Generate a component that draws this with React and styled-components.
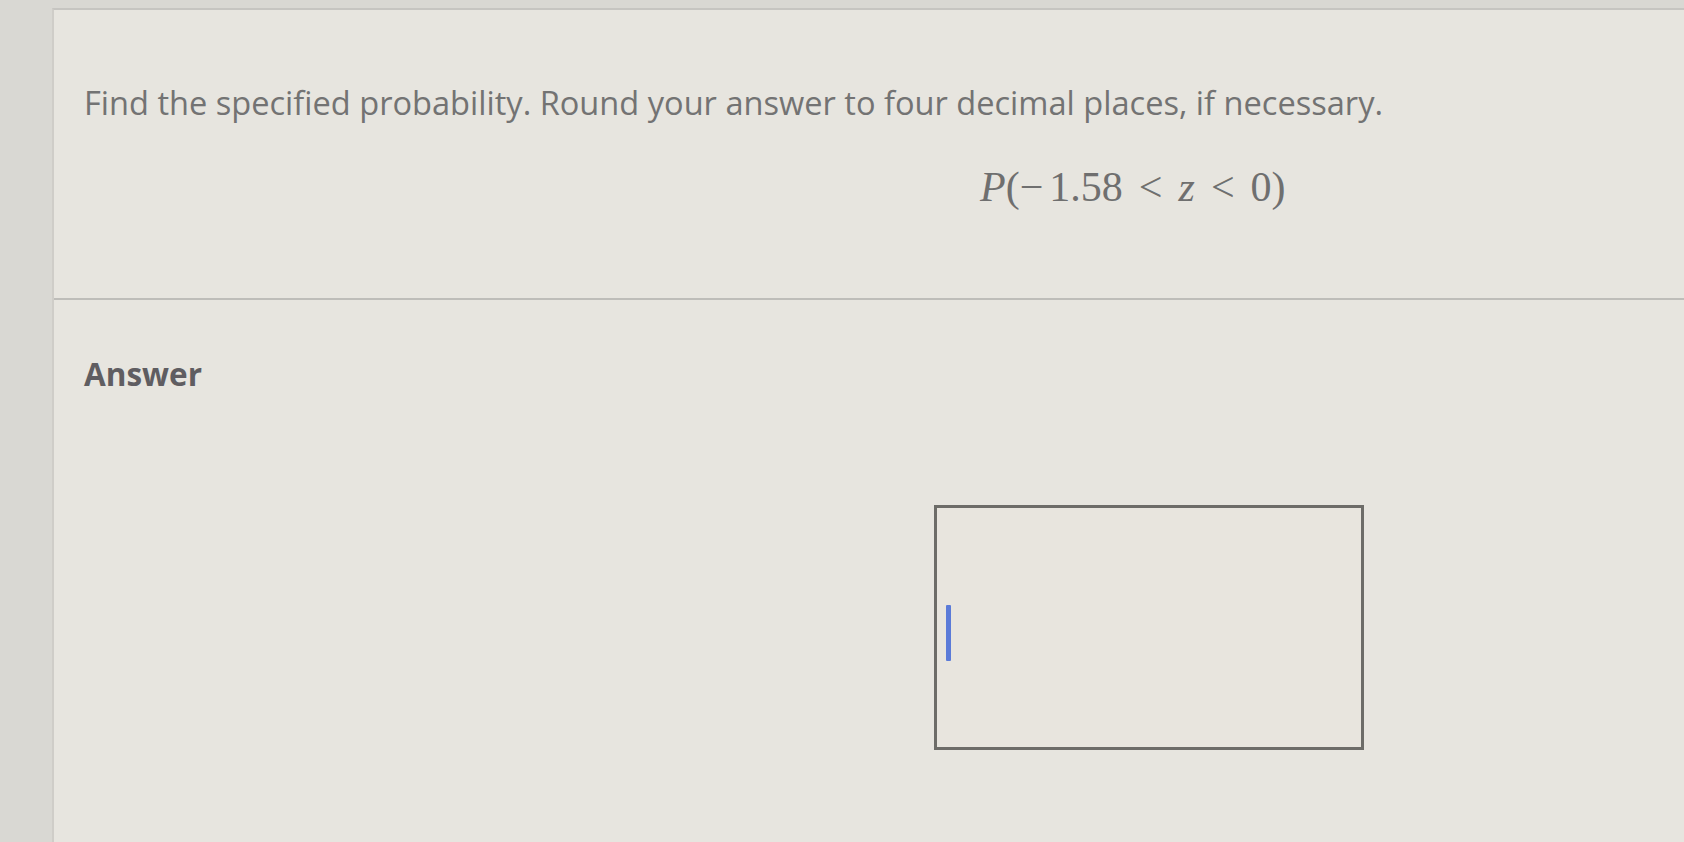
import React from "react";
import styled, { createGlobalStyle } from "styled-components";

const GlobalStyle = createGlobalStyle`
  html, body {
    margin: 0;
    padding: 0;
    background: #d9d8d3;
  }
  #root {
    height: 100vh;
  }
`;

const Page = styled.div`
  display: flex;
  height: 100vh;
  padding-left: 52px;
  padding-top: 8px;
  box-sizing: border-box;
  overflow: hidden;
`;

const Panel = styled.main`
  flex: 1;
  display: flex;
  flex-direction: column;
  background: #e7e5df;
  border-top: 2px solid #c6c5c1;
  border-left: 2px solid #cfcdc8;
`;

const Question = styled.section`
  height: 290px;
  box-sizing: border-box;
  padding: 70px 0 0 30px;
  border-bottom: 2px solid #bebdb9;
`;

const Prompt = styled.p`
  margin: 0;
  font-family: "Open Sans", "Liberation Sans", sans-serif;
  font-size: 32.6px;
  color: #737373;
`;

const MathRow = styled.div`
  margin-top: 38px;
  padding-left: 896px;
  font-family: "Liberation Serif", "DejaVu Serif", serif;
  font-size: 42px;
  color: #6f6f6f;
  white-space: nowrap;
`;

const Var = styled.i`
  font-style: italic;
`;

const Op = styled.span`
  padding: 0 ${(p) => p.$space ?? 16}px;
`;

const AnswerSection = styled.section`
  padding: 52px 0 0 30px;
`;

const Label = styled.h2`
  margin: 0;
  font-family: "Open Sans", "Liberation Sans", sans-serif;
  font-weight: 700;
  font-size: 31.5px;
  color: #5f5d61;
`;

const Field = styled.div`
  margin-top: 110px;
  margin-left: 850px;
  width: 430px;
  height: 245px;
  box-sizing: border-box;
  border: 3px solid #6d6c68;
  background: #e8e5de;
  display: flex;
  align-items: center;
  padding: 10px 0 0 9px;
`;

const Caret = styled.span`
  display: block;
  width: 5px;
  height: 56px;
  background: #5b7bd8;
  border-radius: 1px;
`;

export default function App() {
  return (
    <>
      <GlobalStyle />
      <Page>
        <Panel>
          <Question>
            <Prompt>
              Find the specified probability. Round your answer to four decimal
              places, if necessary.
            </Prompt>
            <MathRow>
              <Var>P</Var>(−<Op $space={3}></Op>1.58<Op>&lt;</Op>
              <Var>z</Var>
              <Op>&lt;</Op>0)
            </MathRow>
          </Question>
          <AnswerSection>
            <Label>Answer</Label>
            <Field>
              <Caret />
            </Field>
          </AnswerSection>
        </Panel>
      </Page>
    </>
  );
}
